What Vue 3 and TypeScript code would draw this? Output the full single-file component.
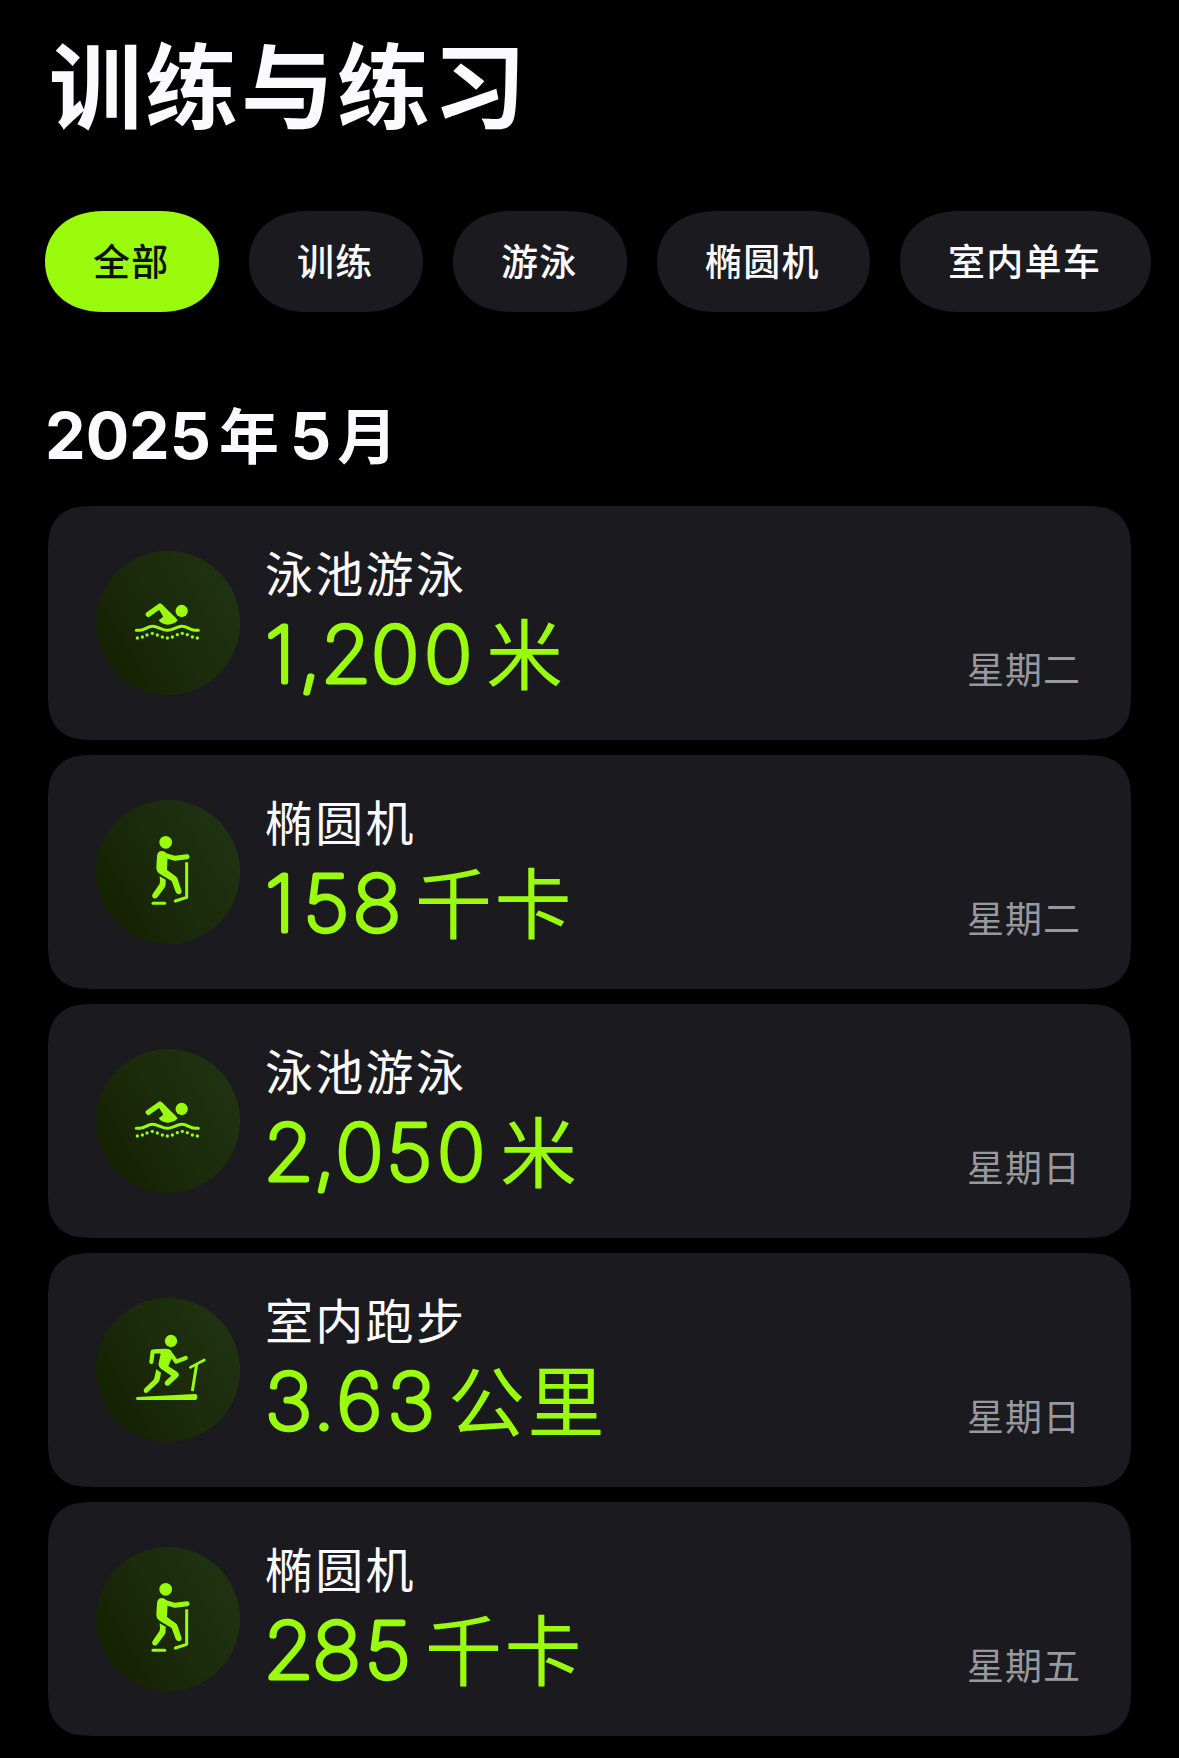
<script setup lang="ts">
type IconName = 'swim' | 'elliptical' | 'treadmill'

interface Filter {
  label: string
  width: number
}

interface Workout {
  icon: IconName
  name: string
  amount: string
  amountWidth: number
  // Per-character spacing adjustments for the large figures
  tracking: string
  unit: string
  day: string
}

const filters: Filter[] = [
  { label: '全部', width: 174 },
  { label: '训练', width: 174 },
  { label: '游泳', width: 174 },
  { label: '椭圆机', width: 213 },
  { label: '室内单车', width: 251 },
]

const workouts: Workout[] = [
  { icon: 'swim', name: '泳池游泳', amount: '1,200', amountWidth: 221, tracking: '0 4.300 0 0 5', unit: '米', day: '星期二' },
  { icon: 'elliptical', name: '椭圆机', amount: '158', amountWidth: 150, tracking: '0 8.500 3.500', unit: '千卡', day: '星期二' },
  { icon: 'swim', name: '泳池游泳', amount: '2,050', amountWidth: 235, tracking: '-1.500 0 0 3 5', unit: '米', day: '星期日' },
  { icon: 'treadmill', name: '室内跑步', amount: '3.63', amountWidth: 183, tracking: '0 1 1.500 5', unit: '公里', day: '星期日' },
  { icon: 'elliptical', name: '椭圆机', amount: '285', amountWidth: 160, tracking: '-1.500 -1 4', unit: '千卡', day: '星期五' },
]

const viewBoxes: Record<IconName, string> = {
  swim: '48 63 432 432',
  elliptical: '48 60 432 432',
  treadmill: '48 54 432 432',
}

const rippleDots: [number, number][] = [
  [172, 324], [187, 321], [201, 315], [217, 310], [232, 315], [247, 321], [262, 324],
  [277, 321], [292, 314], [307, 310], [322, 314], [337, 321], [352, 324],
]

type Point = [number, number]

// One corner as cubic segments, from the left edge up to the top edge.
function cornerPath(w: number, h: number, start: Point, curves: Point[][]): string {
  const fmt = (p: Point) => `${p[0].toFixed(2)} ${p[1].toFixed(2)}`
  const flat: Point[] = [start, ...curves.flat()]
  const reversed = [...flat].reverse()
  const corners: Point[][] = [
    flat,
    reversed.map(([x, y]): Point => [w - x, y]),
    flat.map(([x, y]): Point => [w - x, h - y]),
    reversed.map(([x, y]): Point => [x, h - y]),
  ]
  let d = ''
  corners.forEach((pts, i) => {
    d += `${i ? 'L' : 'M'}${fmt(pts[0])}`
    for (let k = 1; k < pts.length; k += 3) {
      d += `C${fmt(pts[k])} ${fmt(pts[k + 1])} ${fmt(pts[k + 2])}`
    }
  })
  return `path("${d}Z")`
}

function pillShape(width: number): string {
  return cornerPath(width, 101, [0, 50.5], [[[0, 25], [18, 0], [59, 0]]])
}

const r = 36
const cardShape = cornerPath(1083, 234, [0, 1.5287 * r], [
  [[0, 1.0885 * r], [0, 0.8684 * r], [0.0749 * r, 0.6315 * r]],
  [[0.1691 * r, 0.3728 * r], [0.3728 * r, 0.1691 * r], [0.6315 * r, 0.0749 * r]],
  [[0.8684 * r, 0], [1.0885 * r, 0], [1.5287 * r, 0]],
])
</script>

<template>
  <main class="screen">
    <h1 class="title">训练与练习</h1>

    <nav class="filters">
      <button
        v-for="(f, i) in filters"
        :key="f.label"
        class="chip"
        :class="{ active: i === 0 }"
        :style="{ width: f.width + 'px', clipPath: pillShape(f.width) }"
      >{{ f.label }}</button>
    </nav>

    <h2 class="month"><span>2025</span><span class="cjk year">年</span><span>5</span><span class="cjk mon">月</span></h2>

    <section class="list">
      <article v-for="(w, i) in workouts" :key="i" class="card" :style="{ clipPath: cardShape }">
        <div class="badge">
          <svg :viewBox="viewBoxes[w.icon]" width="144" height="144">
            <g v-if="w.icon === 'swim'">
              <circle cx="305" cy="243" r="18.5" />
              <path d="M205 253 L239 229 L282 270" class="line" stroke-width="16" />
              <path d="M238 221 Q243 219 248 225 L293 271 Q280 284 263 284 Q246 284 236 271 L250 260 L238 241 Z" />
              <path d="M169 301 H180 C194 301 202 289 217 289 C234 289 246 301 262 301 C278 301 290 289 306 289 C322 289 330 301 344 301 H355" class="line" stroke-width="9" />
              <circle v-for="(d, k) in rippleDots" :key="k" :cx="d[0]" :cy="d[1]" r="5" />
            </g>
            <g v-else-if="w.icon === 'elliptical'">
              <circle cx="257" cy="187" r="19" />
              <path d="M244 223 L285 235 L321 230" class="line" stroke-width="15" />
              <path d="M231 228 Q233 212 247 213 Q257 214 263 226 L261 270 L287 289 Q292 293 294 300 L304 331 Q307 340 299 342 Q291 344 287 336 L275 303 L241 283 Q228 275 229 262 Z" />
              <path d="M239 289 L257 299 L257 312 Q257 318 253 324 L232 352 Q227 358 220 354 Q214 350 218 342 L238 313 Q240 309 240 304 Z" />
              <path d="M219 370 H254" class="line" stroke-width="9" />
              <path d="M320 247 V352 L286 363" class="line butt" stroke-width="9" />
              <circle cx="286" cy="363" r="4.5" />
            </g>
            <g v-else>
              <circle cx="273" cy="183" r="18.5" />
              <path d="M214 246 L218 215 L250 213" class="line" stroke-width="12.5" />
              <path d="M266 214 L289 245 L317 234" class="line" stroke-width="12.5" />
              <path d="M222 208 L258 206 Q268 206 273 214 L279 224 L265 259 L289 274 Q302 282 293 292 L268 315 Q262 320 256 315 Q251 309 257 303 L274 287 L243 266 Q234 259 236 249 L242 222 Z" />
              <path d="M229 268 L243 278 L239 299 Q237 304 234 308 L203 337 Q197 341 192 336 Q189 330 194 325 L220 300 Q222 298 223 294 Z" />
              <path d="M331 262 L373 240" class="line" stroke-width="8" />
              <path d="M350 253 L337 333" class="line butt" stroke-width="9" />
              <path d="M172 351 L345 342 Q352 342 352 350 Q352 360 344 360 H172 Q168 359 168 355.500 Q168 352 172 351 Z" />
            </g>
          </svg>
        </div>
        <div class="info">
          <div class="name">{{ w.name }}</div>
          <div class="value">
            <svg class="amount" height="84" :width="w.amountWidth"><text x="0" y="71.500" :dx="w.tracking" transform="scale(1.05 1)">{{ w.amount }}</text></svg>
            <span class="unit">{{ w.unit }}</span>
          </div>
        </div>
        <div class="day">{{ w.day }}</div>
      </article>
    </section>
  </main>
</template>

<style>
body {
  background: #000;
}
</style>

<style scoped>
.screen {
  box-sizing: border-box;
  width: 1179px;
  height: 1758px;
  padding: 26px 0 0;
  overflow: hidden;
  background: #000;
  color: #fafaff;
  font-family: Inter, "Noto Sans CJK SC", sans-serif;
}
.title {
  margin: 0 0 0 49px;
  height: 112px;
  line-height: 112px;
  font-family: "Noto Sans CJK SC", sans-serif;
  font-size: 93px;
  font-weight: 700;
  letter-spacing: 3px;
}
.filters {
  display: flex;
  gap: 30px;
  margin: 73px 0 0 45px;
}
.chip {
  flex: none;
  box-sizing: border-box;
  height: 101px;
  margin: 0;
  padding: 0 0 2px 48px;
  border: 0;
  background: #1b1b1f;
  color: #fafaff;
  font-family: "Noto Sans CJK SC", sans-serif;
  font-size: 37px;
  font-weight: 500;
  line-height: 99px;
  letter-spacing: 1.300px;
  text-align: left;
  white-space: nowrap;
}
.chip.active {
  background: #9bfb0d;
  color: #0a1200;
}
.month {
  display: flex;
  align-items: baseline;
  margin: 85px 0 0 45px;
  height: 109px;
  line-height: 72px;
  font-size: 64.500px;
  font-weight: 700;
}
.cjk {
  font-family: "Noto Sans CJK SC", sans-serif;
  font-size: 60px;
}
.year {
  margin: 0 11px 0 8px;
}
.mon {
  margin-left: 6px;
}
.list {
  display: flex;
  flex-direction: column;
  gap: 15px;
  margin: 0 48px;
}
.card {
  display: flex;
  box-sizing: border-box;
  height: 234px;
  padding: 45px 50px 0 48px;
  background: #1b1b1f;
}
.badge {
  flex: none;
  width: 144px;
  height: 144px;
  border-radius: 50%;
  background: linear-gradient(60deg, #142000 5%, #1b2b0b 50%, #213513 100%);
}
.badge svg {
  display: block;
  fill: #9bfb0d;
}
.line {
  fill: none;
  stroke: #9bfb0d;
  stroke-linecap: round;
  stroke-linejoin: round;
}
.line.butt {
  stroke-linecap: butt;
}
.info {
  flex: 1;
  margin-left: 25px;
}
.name {
  margin-top: -10px;
  height: 60px;
  line-height: 60px;
  font-family: "Noto Sans CJK SC", sans-serif;
  font-size: 48px;
  letter-spacing: 2.3px;
}
.value {
  display: flex;
  margin-top: 9px;
  color: #9bfb0d;
}
.amount {
  flex: none;
  overflow: visible;
}
.amount text {
  fill: #9bfb0d;
  stroke: #9bfb0d;
  stroke-width: 5px;
  stroke-linejoin: round;
  font-family: Inter, sans-serif;
  font-size: 77px;
  font-weight: 100;
  font-kerning: none;
}
.unit {
  height: 84px;
  line-height: 82px;
  font-family: "Noto Sans CJK SC", sans-serif;
  font-size: 77px;
  letter-spacing: 2.4px;
}
.day {
  align-self: flex-start;
  margin-top: 90px;
  line-height: 54px;
  color: #98989f;
  font-family: "Noto Sans CJK SC", sans-serif;
  font-size: 37px;
  letter-spacing: 1px;
}
</style>
